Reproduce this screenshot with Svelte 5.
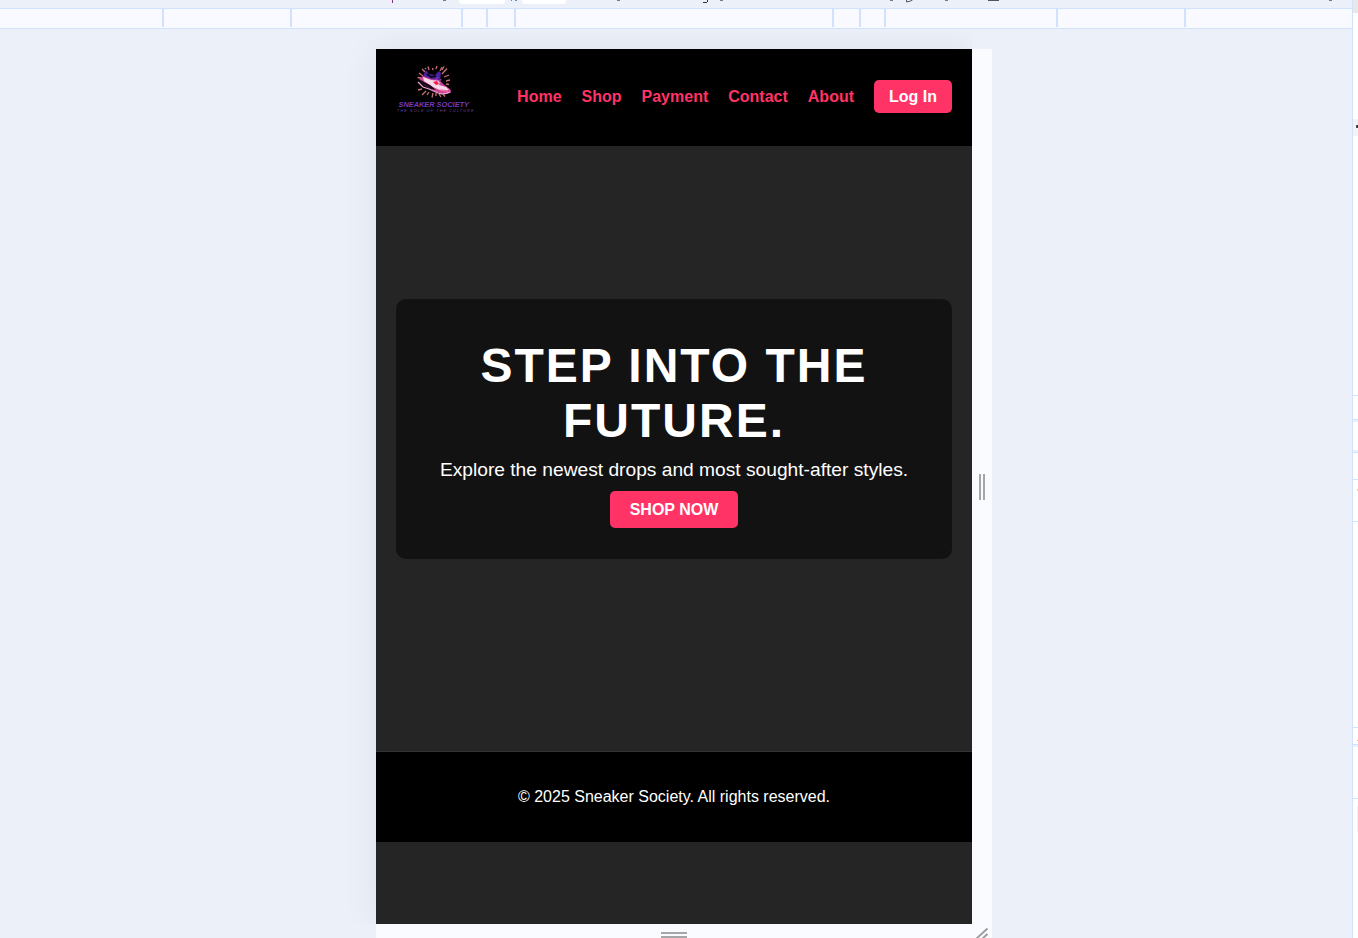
<script>
  const tabs = ['Home', 'Shop', 'Payment', 'Contact', 'About'];
  const segments = [162, 126, 169, 23, 26, 316, 25, 23, 170, 126];
  const sparks = [
    [33, 6, 32, 2.5], [37, 6, 36.500, 4], [40, 5, 41, 2], [44, 7, 46, 3], [46, 10, 51, 4.5], [48, 13, 53, 11],
    [50, 17, 54, 16], [29, 8, 26, 5], [27, 12, 23, 9], [25, 14, 21.500, 13.500], [26, 25, 22, 26],
    [30, 27, 26, 31], [33, 28, 31, 31], [37, 29, 36, 33.500], [40, 29, 40, 32], [43, 30, 45, 33],
    [47, 30, 49, 32.500], [50, 20, 53, 20.500], [46, 6, 48, 2.5], [30, 5, 29, 4]
  ];
  const panels = [
    { h: 13, bg: '#e8e8e8', line: false },
    { h: 106, bg: '#fff', line: false },
    { h: 17, bg: '#f3f3f3', line: false },
    { h: 260, bg: '#fff', line: true },
    { h: 24, bg: '#fff', line: true },
    { h: 2, bg: '#ecf1fa', line: false },
    { h: 28, bg: '#fff', line: false },
    { h: 3, bg: '#ecf1fa', line: true },
    { h: 27, bg: '#fff', line: true },
    { h: 42, bg: '#fff', line: true },
    { h: 206, bg: '#fff', line: true },
    { h: 17, bg: '#fff', line: true },
    { h: 2, bg: '#ecf1fa', line: false },
    { h: 52, bg: '#fff', line: true }
  ];
</script>

<div class="workspace">
  <div class="canvas">
    <svg class="toolbar" width="1352" height="8" viewBox="0 0 1352 8" shape-rendering="crispEdges">
      <path d="M392.5 0v3" stroke="#81338a" />
      <path d="M443 .5h3M617 .5h3M720 .5h3M890 .5h3M945 .5h3M1329 .5h3" stroke="#777b83" />
      <path d="M511 .5h1M515 .5h2" stroke="#6c86b4" />
      <path d="M459 0h46v1q0 3-3 3h-40q-3 0-3-3zM522 0h44v1q0 3-3 3h-38q-3 0-3-3z" fill="#fff" shape-rendering="auto" />
      <path d="M703 2.5h4M707.500 0v2" stroke="#333" />
      <g fill="none" stroke="#555" shape-rendering="auto"><path d="M906.500 0v2l4-1 2-1" /><path d="M988 .5h11" /></g>
    </svg>
    <div class="ruler">
      {#each segments as width}<span style:width="{width}px"></span>{/each}
    </div>
    <div class="stage">
      <div class="device">
        <main>
          <header>
            <svg class="logo" width="80" height="50" viewBox="0 0 80 50">
              {#each sparks as [x1, y1, x2, y2]}
                <path d="M{x1} {y1}L{x2} {y2}" stroke="#c87078" stroke-width="1.3" />
              {/each}
              <path d="M27 12l3-6 3 4 6 1 4-4 2 2-1 7 3 4-8 1-10-7z" fill="#4c22a0" />
              <path d="M31 10l4 3 5-1" fill="none" stroke="#120720" stroke-width="2" />
              <path d="M23 15l4-3 8 3 8 1 4 4 7 5q2 3 0 4-6 2-14-1l-12-7z" fill="#cf4699" />
              <path d="M27 13l8 3 9 1-1 4 7 2 3 3-7 1-9-4-9-6z" fill="#f7d9e9" />
              <path d="M23 15l5 3 6 3 6 5-5-1-10-6z" fill="#180818" />
              <path d="M22 18l5 5 6 2 9 4q6 2 12-1" fill="none" stroke="#eba5cc" stroke-width="1.3" />
              <path d="M37 18l4-1 2 3-3 1z" fill="#f51b42" />
              <path d="M42 13l-2 3M45 15l-2 3" stroke="#a437b0" stroke-width="1.2" />
              <path d="M44 26l8 1" stroke="#ed719b" stroke-width="1.5" />
              <text class="brand" x="2.500" y="42.500" textLength="70.500" lengthAdjust="spacingAndGlyphs">SNEAKER SOCIETY</text>
              <text class="motto" x="1" y="48" textLength="76.500">THE SOLE OF THE CULTURE</text>
            </svg>
            <nav>
              {#each tabs as tab}<a href="#{tab}">{tab}</a>{/each}
              <button class="login">Log In</button>
            </nav>
          </header>
          <section class="hero">
            <div class="card">
              <h1>STEP INTO THE FUTURE.</h1>
              <p>Explore the newest drops and most sought-after styles.</p>
              <button class="shop">SHOP NOW</button>
            </div>
          </section>
          <footer>© 2025 Sneaker Society. All rights reserved.</footer>
        </main>
        <div class="side-handle"><i></i><i></i></div>
        <div class="bottom-handle"><i></i><i></i></div>
        <svg class="corner" width="20" height="14" viewBox="0 0 20 14"><path d="M4 15L15.500 4.500M10 15l5.500-5" stroke="#9b9b9c" stroke-width="1.8" /></svg>
      </div>
    </div>
  </div>
  <aside>
    {#each panels as p}<div class:line={p.line} style:height="{p.h}px" style:background={p.bg}></div>{/each}
    <span class="dot"></span>
    <span class="mark warm"></span>
    <span class="mark gold"></span>
    <span class="mark rose"></span>
  </aside>
</div>

<style>
  :global(body) { margin: 0; overflow: hidden; }
  .workspace { display: flex; width: 1358px; height: 938px; overflow: hidden; background: #ebf0f9; font-family: "Liberation Sans", Arial, sans-serif; }
  .canvas { width: 1352px; flex: none; }
  .toolbar { display: block; }
  .ruler { box-sizing: border-box; height: 21px; display: flex; border: solid #d0e2fc; border-width: 1px 0; background: #f8faff; position: relative; z-index: 1; }
  .ruler span { height: 18px; border-right: 2px solid #d0e2fc; flex: none; }
  .stage { height: 909px; padding: 20px 0 0 376px; box-sizing: border-box; overflow: hidden; }
  .device { display: grid; grid-template: 875px 14px / 596px 20px; width: 616px; background: #f9fbff; }
  main { background: #252525; color: #fff; box-shadow: 0 0 35px rgba(0, 0, 0, .065); clip-path: inset(-40px 0 0 -40px); }
  header { box-sizing: border-box; height: 97px; padding: 15px 20px; display: flex; justify-content: space-between; align-items: flex-start; background: #000; }
  .logo { display: block; }
  .brand { font: italic 700 7.4px "Liberation Sans", sans-serif; fill: #7438bd; }
  .motto { font: italic 3.8px "Liberation Sans", sans-serif; fill: #67439a; }
  nav { display: flex; align-items: center; gap: 20px; padding-top: 16px; }
  nav a { color: #ff3366; font-weight: 700; font-size: 16px; text-decoration: none; }
  button { border: 0; border-radius: 5px; background: #ff3366; color: #fff; font: 700 16px "Liberation Sans", Arial, sans-serif; padding: 0; }
  .login { width: 78px; height: 33px; }
  .hero { box-sizing: border-box; height: 605px; padding: 153px 20px 0; }
  .card { box-sizing: border-box; height: 260px; padding: 39px 40px 0; border-radius: 10px; background: #121212; text-align: center; }
  h1 { margin: 0; font-size: 48px; line-height: 55px; letter-spacing: 2px; }
  p { margin: 11px 0 0; font-size: 19.2px; line-height: 22px; white-space: nowrap; }
  .shop { display: block; width: 128px; height: 37px; margin: 10px auto 0; }
  footer { box-sizing: border-box; height: 91px; border-top: 1px solid #333; background: #000; text-align: center; font-size: 16px; line-height: 18px; padding-top: 36px; }
  .side-handle { display: flex; align-items: center; justify-content: center; gap: 2px; }
  .side-handle i { width: 2px; height: 26px; background: #a5a6a8; }
  .bottom-handle { display: flex; flex-direction: column; align-items: center; gap: 2px; padding-top: 8px; }
  .bottom-handle i { width: 26px; height: 2px; flex: none; background: #a5a6a8; }
  .corner { display: block; }
  aside { width: 5px; flex: none; border-left: 1px solid #d0e2fc; background: #fff; position: relative; }
  aside div { box-sizing: border-box; }
  .line { border-bottom: 1px solid #d0e2fc; }
  .dot { position: absolute; left: 3px; top: 125px; width: 3px; height: 3px; border-radius: 1px; background: #333; }
  .mark { position: absolute; left: 4px; width: 1px; }
  .warm { top: 489px; height: 2px; background: #f5cf8c; }
  .gold { top: 740px; height: 1px; background: #efb74c; }
  .rose { top: 806px; height: 26px; background: #f7edf0; }
</style>
